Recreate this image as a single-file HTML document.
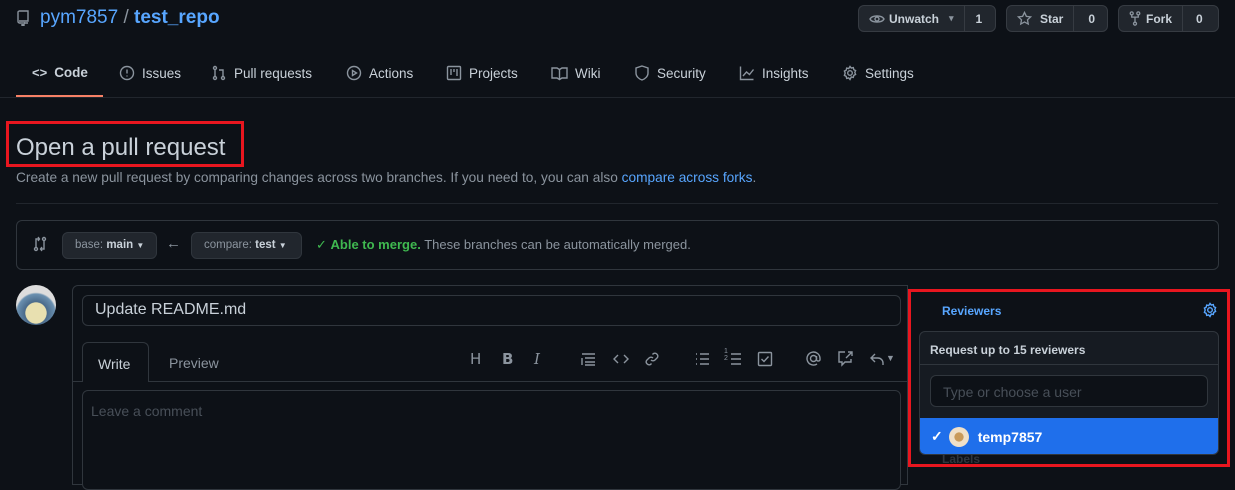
<!DOCTYPE html>
<html><head><meta charset="utf-8"><style>
*{box-sizing:border-box;margin:0;padding:0}
body{width:1235px;height:483px;overflow:hidden;background:#0d1117;font-family:"Liberation Sans",sans-serif;color:#c9d1d9;position:relative;font-size:14px}
.a{position:absolute;white-space:nowrap}
.btn{position:absolute;background:#21262d;border:1px solid #363b42;border-radius:6px;height:27px;top:5px;display:flex;font-size:12px;font-weight:bold;color:#c9d1d9}
.btn span{display:flex;align-items:center;padding:0 10px}
.btn .c{border-left:1px solid #363b42;padding:0 11px}
.tab{position:absolute;top:65px;font-size:13.5px;color:#c9d1d9;display:flex;align-items:center;gap:7px;white-space:nowrap}
svg{fill:none;stroke:#8b949e;stroke-width:1.4}
.red{position:absolute;border:3px solid #e8161f}
</style></head><body>
<svg class="a" style="left:17px;top:10px" width="12" height="16" viewBox="0 0 12 16"><path d="M2 1h9v10H2M2 1a1.5 1.5 0 00-1 1.5v9A1.5 1.5 0 002.5 13H4M7 13h4M5 12v4l1-1 1 1v-4"/></svg>
<div class="a" style="left:40px;top:7px;font-size:19px;color:#58a6ff">pym7857 <span style="color:#8b949e">/</span> <b style="font-weight:bold">test_repo</b></div>

<div class="btn" style="left:858px;width:138px"><span style="gap:4px"><svg width="16" height="12" viewBox="0 0 16 12"><path d="M1 6c2-4 12-4 14 0c-2 4-12 4-14 0z"/><circle cx="8" cy="6" r="2"/></svg>Unwatch <span style="padding:0 0 0 6px;font-size:9px;color:#8b949e">▾</span></span><span class="c">1</span></div>
<div class="btn" style="left:1006px;width:102px"><span style="gap:8px"><svg width="15" height="15" viewBox="0 0 16 16"><path d="M8 1.5l2 4.2 4.5.6-3.3 3.1.8 4.5L8 11.7l-4 2.2.8-4.5L1.5 6.3 6 5.7z"/></svg>Star</span><span class="c" style="padding:0 14px">0</span></div>
<div class="btn" style="left:1118px;width:101px"><span style="gap:5px"><svg width="12" height="15" viewBox="0 0 12 16"><circle cx="2.5" cy="2.5" r="1.6"/><circle cx="9.5" cy="2.5" r="1.6"/><circle cx="6" cy="13.5" r="1.6"/><path d="M2.5 4v2.5h7V4M6 6.5v5"/></svg>Fork</span><span class="c" style="padding:0 13px">0</span></div>

<div class="tab" style="left:32px"><span style="font-size:13px;font-weight:bold">&lt;&gt;</span><b>Code</b></div>
<div class="tab" style="left:119px"><svg width="16" height="16"><circle cx="8" cy="8" r="6.5"/><path d="M8 4.5v4M8 10.5v1"/></svg>Issues</div>
<div class="tab" style="left:211px"><svg width="16" height="16"><circle cx="4" cy="3" r="1.5"/><circle cx="4" cy="13" r="1.5"/><circle cx="12" cy="13" r="1.5"/><path d="M4 4.5v7M12 11.5V5H8"/></svg>Pull requests</div>
<div class="tab" style="left:346px"><svg width="16" height="16"><circle cx="8" cy="8" r="6.5"/><path d="M6.5 5.5v5l4-2.5z"/></svg>Actions</div>
<div class="tab" style="left:446px"><svg width="16" height="16"><rect x="1.5" y="1.5" width="13" height="13" rx="1"/><path d="M5 4v6M8 4v3M11 4v7"/></svg>Projects</div>
<div class="tab" style="left:551px"><svg width="17" height="16"><path d="M1 3h5l2.5 1.5L11 3h5v10h-5l-2.5 1.5L6 13H1zM8.5 4.5v10"/></svg>Wiki</div>
<div class="tab" style="left:634px"><svg width="16" height="16"><path d="M8 1l6 2v5c0 3.5-3 6-6 7-3-1-6-3.5-6-7V3z"/></svg>Security</div>
<div class="tab" style="left:739px"><svg width="16" height="16"><path d="M1.5 1.5v13h13M4 11l3.5-4 3 2.5 4-5"/></svg>Insights</div>
<div class="tab" style="left:842px"><svg width="16" height="16"><circle cx="8" cy="8" r="2.3"/><path d="M8 1.5l1.3 1.6 2-.5.5 2 1.8 1-.8 1.9.8 1.9-1.8 1-.5 2-2-.5L8 14.5l-1.3-1.6-2 .5-.5-2-1.8-1L3.2 8l-.8-1.9 1.8-1 .5-2 2 .5z"/></svg>Settings</div>
<div class="a" style="left:0;top:97px;width:1235px;height:1px;background:#21262d"></div>
<div class="a" style="left:16px;top:95px;width:87px;height:2px;background:#f78166"></div>

<div class="red" style="left:6px;top:121px;width:238px;height:46px"></div>
<div class="a" style="left:16px;top:134px;font-size:24px;color:#c9d1d9">Open a pull request</div>
<div class="a" style="left:16px;top:170px;font-size:13.7px;color:#8b949e">Create a new pull request by comparing changes across two branches. If you need to, you can also <span style="color:#58a6ff">compare across forks</span>.</div>
<div class="a" style="left:16px;top:203px;width:1202px;height:1px;background:#21262d"></div>

<div class="a" style="left:16px;top:220px;width:1203px;height:50px;border:1px solid #30363d;border-radius:6px"></div>
<svg class="a" style="left:33px;top:236px" width="14" height="16" viewBox="0 0 14 16"><circle cx="3" cy="13" r="1.5"/><circle cx="11" cy="3" r="1.5"/><path d="M3 11.5V3H6M5 1l1.5 2L5 5M11 4.5V13H8M9 11l-1.5 2L9 15"/></svg>
<div class="a" style="left:62px;top:232px;width:95px;height:27px;background:#21262d;border:1px solid #30363d;border-radius:6px;font-size:11.5px;color:#8b949e;padding:6px 0 0 12px">base: <b style="color:#c9d1d9">main</b> <span style="font-size:8px;color:#c9d1d9">▼</span></div>
<div class="a" style="left:166px;top:235px;font-size:15px;color:#8b949e">←</div>
<div class="a" style="left:191px;top:232px;width:111px;height:27px;background:#21262d;border:1px solid #30363d;border-radius:6px;font-size:11.5px;color:#8b949e;padding:6px 0 0 12px">compare: <b style="color:#c9d1d9">test</b> <span style="font-size:8px;color:#c9d1d9">▼</span></div>
<div class="a" style="left:316px;top:237px;font-size:13px;color:#8b949e"><span style="color:#3fb950">✓ <b>Able to merge.</b></span> These branches can be automatically merged.</div>

<div class="a" style="left:16px;top:285px;width:40px;height:40px;border-radius:50%;background:radial-gradient(circle at 50% 70%,#e8e0b0 30%,#4a6a8a 32%,#6a90b0 55%,#ddd 60%)"></div>
<div class="a" style="left:72px;top:285px;width:836px;height:200px;border:1px solid #30363d;border-radius:6px 0 0 0;background:#0d1117"></div>
<div class="a" style="left:82px;top:295px;width:819px;height:31px;border:1px solid #30363d;border-radius:6px;background:#0d1117;font-size:16px;padding:5px 12px;color:#c9d1d9">Update README.md</div>
<div class="a" style="left:73px;top:381px;width:834px;height:1px;background:#30363d"></div>
<div class="a" style="left:82px;top:342px;width:67px;height:40px;border:1px solid #30363d;border-bottom:none;border-radius:6px 6px 0 0;background:#0d1117;padding:13px 15px;font-size:14px">Write</div>
<div class="a" style="left:169px;top:355px;font-size:14px;color:#8b949e">Preview</div>
<div class="a" style="left:470px;top:350px;font-size:15px;color:#8b949e;font-family:'DejaVu Sans',sans-serif">H</div>
<div class="a" style="left:502px;top:350px;font-size:15px;color:#8b949e;font-weight:bold;font-family:'DejaVu Sans',sans-serif">B</div>
<div class="a" style="left:534px;top:350px;font-size:15px;color:#8b949e;font-style:italic;font-family:'DejaVu Serif',serif">I</div>
<svg class="a" style="left:580px;top:351px" width="16" height="16"><path d="M2 3h13M5 7h10M5 11h10M5 14h10M2 7v7"/></svg>
<svg class="a" style="left:612px;top:351px" width="18" height="16"><path d="M6 4L2 8l4 4M12 4l4 4-4 4"/></svg>
<svg class="a" style="left:644px;top:351px" width="16" height="16"><path d="M7 9a3 3 0 004 0l2.5-2.5a3 3 0 00-4-4L8.5 3.5M9 7a3 3 0 00-4 0L2.5 9.5a3 3 0 004 4l1-1"/></svg>
<svg class="a" style="left:694px;top:351px" width="16" height="16"><path d="M2 3h1M2 8h1M2 13h1M6 3h9M6 8h9M6 13h9"/></svg>
<div class="a" style="left:724px;top:348px;font-size:7px;color:#8b949e;line-height:7px">1<br>2</div>
<svg class="a" style="left:726px;top:351px" width="16" height="16"><path d="M5 3h10M5 8h10M5 13h10"/></svg>
<svg class="a" style="left:757px;top:351px" width="16" height="16"><rect x="1.5" y="1.5" width="13" height="13" rx="1"/><path d="M4.5 8l2.5 2.5 4.5-5"/></svg>
<svg class="a" style="left:805px;top:350px" width="17" height="17"><circle cx="8.5" cy="8.5" r="3"/><path d="M11.5 6v4a2 2 0 003.5 0V8.5a6.5 6.5 0 10-3 5.5"/></svg>
<svg class="a" style="left:837px;top:350px" width="17" height="17"><path d="M8 2H2v10h3v3l3-3h6V9M11 2h4v4M15 2l-6 6"/></svg>
<svg class="a" style="left:869px;top:351px" width="16" height="16"><path d="M6 3L2 7l4 4M2 7h7a5 5 0 015 5v2"/></svg>
<div class="a" style="left:886px;top:353px;font-size:9px;color:#8b949e">▼</div>
<div class="a" style="left:82px;top:390px;width:819px;height:100px;border:1px solid #30363d;border-radius:6px;background:#0d1117;padding:12px 8px;font-size:14px;color:#484f58">Leave a comment</div>

<div class="a" style="left:942px;top:304px;font-size:12px;font-weight:bold;color:#58a6ff">Reviewers</div>
<svg class="a" style="left:1202px;top:302px;stroke:#58a6ff" width="16" height="16"><circle cx="8" cy="8" r="2.3"/><path d="M8 1.5l1.3 1.6 2-.5.5 2 1.8 1-.8 1.9.8 1.9-1.8 1-.5 2-2-.5L8 14.5l-1.3-1.6-2 .5-.5-2-1.8-1L3.2 8l-.8-1.9 1.8-1 .5-2 2 .5z"/></svg>
<div class="a" style="left:942px;top:452px;font-size:12px;font-weight:bold;color:#30363d">Labels</div>
<div class="a" style="left:919px;top:331px;width:300px;height:124px;background:#161b22;border:1px solid #30363d;border-radius:6px;overflow:hidden">
 <div style="height:33px;border-bottom:1px solid #30363d;font-size:12px;font-weight:bold;padding:11px 10px;color:#c9d1d9">Request up to 15 reviewers</div>
 <div style="position:absolute;left:10px;top:43px;width:278px;height:32px;background:#0d1117;border:1px solid #30363d;border-radius:6px;padding:8px 12px;font-size:14px;color:#484f58">Type or choose a user</div>
 <div style="position:absolute;left:0;top:86px;width:300px;height:37px;background:#1f6feb;display:flex;align-items:center;padding-left:11px;color:#fff;font-size:14px;font-weight:bold">✓<span style="display:inline-block;width:20px;height:20px;border-radius:50%;background:radial-gradient(circle,#c99a5a 30%,#f0e0c8 35%);margin:0 9px 0 6px"></span>temp7857</div>
</div>
<div class="red" style="left:908px;top:289px;width:322px;height:178px"></div>
</body></html>
